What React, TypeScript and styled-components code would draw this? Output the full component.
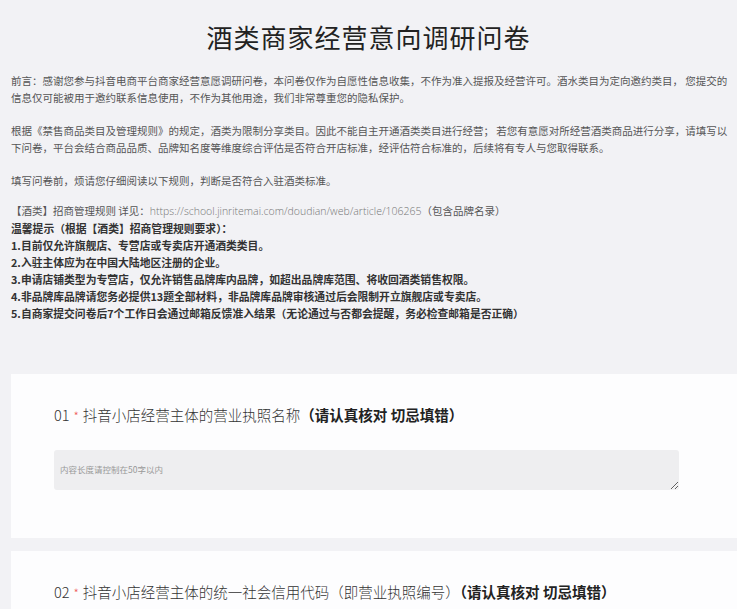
import React from "react";
import styled, { createGlobalStyle } from "styled-components";

const Global = createGlobalStyle`
  body { margin: 0; background: #f2f2f5; font-family: "Noto Sans CJK SC", "Noto Sans", sans-serif; overflow: hidden; }
`;
const Page = styled.div`width: 737px; height: 609px; overflow: hidden;`;
const Title = styled.h1`
  margin: 0; padding-top: 18px; height: 46px; text-align: center;
  font-size: 26px; font-weight: 400; color: #222; letter-spacing: 1px;
`;
const Intro = styled.div`
  padding: 8px 8px 0 11px; font-size: 10.5px; line-height: 17px; color: #555;
`;
const P = styled.p<{ $gap?: number }>`margin: 0 0 ${p => p.$gap ?? 16}px 0;`;
const B = styled.div`font-weight: 700; color: #333; font-size: 10.8px;`;
const Link = styled.span`color: #777; font-family: "Open Sans", sans-serif; font-weight: 300;`;
const Cards = styled.div`display: flex; flex-direction: column; gap: 13px; padding: 52px 0 0 11px;`;
const Card = styled.div<{ $h: number }>`
  background: #fdfdfe; height: ${p => p.$h}px; padding: 30px 0 0 43px; box-sizing: border-box;
`;
const Q = styled.div`font-size: 14.5px; color: #333; font-weight: 300;`;
const Star = styled.span`color: #e55; font-size: 12px; margin: 0 4px;`;
const Strong = styled.b`font-weight: 700; color: #222;`;
const Area = styled.textarea`
  display: block; margin-top: 25px; width: 625px; height: 40px; box-sizing: border-box;
  background: #eeeef0; border: none; border-radius: 3px; padding: 13px 6px; resize: vertical;
  font-family: inherit; font-size: 8.5px; &::placeholder { color: #999; }
`;

export default function App() {
  return (
    <Page>
      <Global />
      <Title>酒类商家经营意向调研问卷</Title>
      <Intro>
        <P>前言：感谢您参与抖音电商平台商家经营意愿调研问卷，本问卷仅作为自愿性信息收集，不作为准入提报及经营许可。酒水类目为定向邀约类目， 您提交的信息仅可能被用于邀约联系信息使用，不作为其他用途，我们非常尊重您的隐私保护。</P>
        <P>根据《禁售商品类目及管理规则》的规定，酒类为限制分享类目。因此不能自主开通酒类类目进行经营； 若您有意愿对所经营酒类商品进行分享，请填写以下问卷，平台会结合商品品质、品牌知名度等维度综合评估是否符合开店标准，经评估符合标准的，后续将有专人与您取得联系。</P>
        <P $gap={13}>填写问卷前，烦请您仔细阅读以下规则，判断是否符合入驻酒类标准。</P>
        <div>【酒类】招商管理规则 详见：<Link>https://school.jinritemai.com/doudian/web/article/106265</Link>（包含品牌名录）</div>
        <B>温馨提示（根据【酒类】招商管理规则要求）：</B>
        <B>1.目前仅允许旗舰店、专营店或专卖店开通酒类类目。</B>
        <B>2.入驻主体应为在中国大陆地区注册的企业。</B>
        <B>3.申请店铺类型为专营店，仅允许销售品牌库内品牌，如超出品牌库范围、将收回酒类销售权限。</B>
        <B>4.非品牌库品牌请您务必提供13题全部材料，非品牌库品牌审核通过后会限制开立旗舰店或专卖店。</B>
        <B>5.自商家提交问卷后7个工作日会通过邮箱反馈准入结果（无论通过与否都会提醒，务必检查邮箱是否正确）</B>
      </Intro>
      <Cards>
        <Card $h={164}>
          <Q>01<Star>*</Star>抖音小店经营主体的营业执照名称<Strong>（请认真核对 切忌填错）</Strong></Q>
          <Area placeholder="内容长度请控制在50字以内" />
        </Card>
        <Card $h={120}>
          <Q>02<Star>*</Star>抖音小店经营主体的统一社会信用代码（即营业执照编号）<Strong>（请认真核对 切忌填错）</Strong></Q>
        </Card>
      </Cards>
    </Page>
  );
}
